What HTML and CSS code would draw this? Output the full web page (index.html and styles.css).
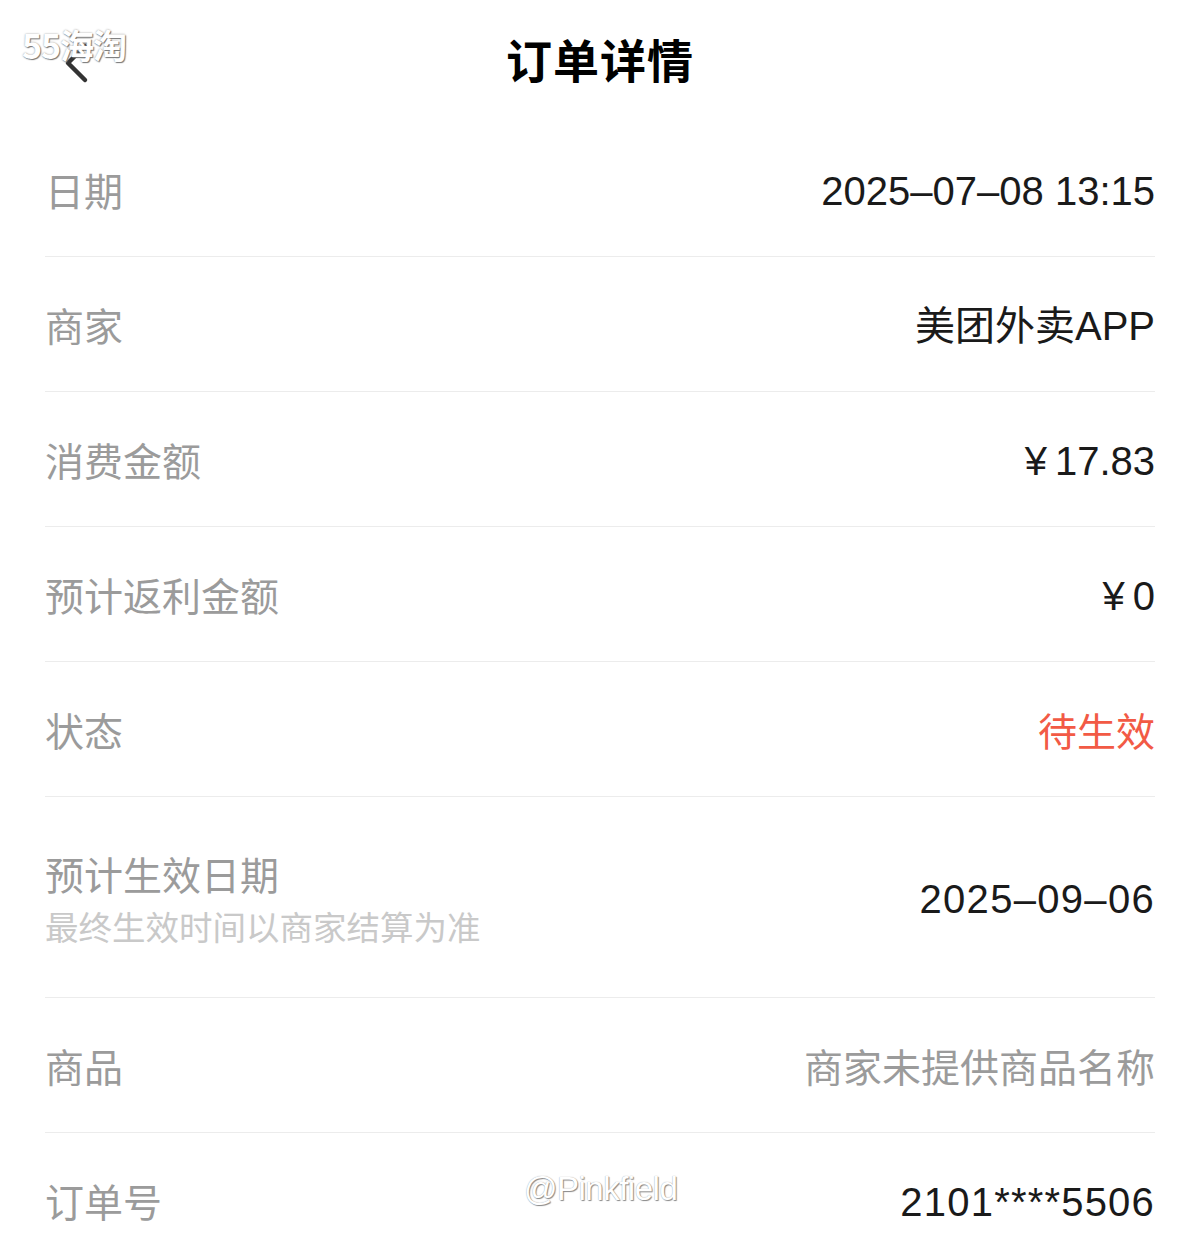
FILE: index.html
```html
<!DOCTYPE html>
<html lang="zh-CN">
<head>
<meta charset="utf-8">
<title>订单详情</title>
<link rel="stylesheet" href="styles.css">
</head>
<body>
<div class="page">
  <header class="header">
    <button class="back" aria-label="返回">
      <svg width="30" height="44" viewBox="0 0 30 44"><polyline points="21,4 4,21 21,38" fill="none" stroke="#333" stroke-width="4.5" stroke-linecap="round" stroke-linejoin="round"/></svg>
    </button>
    <h1 class="title">订单详情</h1>
    <div class="wm-logo">55海淘</div>
  </header>
  <main class="list">
    <div class="row"><span class="label">日期</span><span class="value num">2025–07–08 13:15</span></div>
    <div class="row"><span class="label">商家</span><span class="value num">美团外卖APP</span></div>
    <div class="row"><span class="label">消费金额</span><span class="value num"><span class="yen">¥</span>17.83</span></div>
    <div class="row"><span class="label">预计返利金额</span><span class="value num"><span class="yen">¥</span>0</span></div>
    <div class="row"><span class="label">状态</span><span class="value status">待生效</span></div>
    <div class="row tall">
      <div class="label-group">
        <span class="label">预计生效日期</span>
        <span class="sub">最终生效时间以商家结算为准</span>
      </div>
      <span class="value num wide">2025–09–06</span>
    </div>
    <div class="row"><span class="label">商品</span><span class="value muted">商家未提供商品名称</span></div>
    <div class="row"><span class="label">订单号</span><span class="value num order">2101****5506</span></div>
  </main>
  <div class="wm-user">@Pinkfield</div>
</div>
</body>
</html>
```

FILE: styles.css
```css
* { box-sizing: border-box; }
html, body { margin: 0; padding: 0; background: #fff; }
body {
  font-family: "Liberation Sans", "Noto Sans CJK SC", sans-serif;
  color: #222;
  overflow: hidden;
}
.page { position: relative; width: 1200px; height: 1237px; overflow: hidden; }
.header {
  position: relative;
  height: 122px;
  display: flex;
  align-items: center;
  justify-content: center;
}
.back {
  position: absolute;
  left: 64px;
  top: 42px;
  padding: 0;
  border: 0;
  background: none;
  width: 30px;
  height: 44px;
}
.back svg { display: block; }
.title {
  margin: 0 0 6px;
  font-family: "Noto Sans CJK SC", sans-serif;
  font-size: 46px;
  font-weight: 700;
  color: #000;
  letter-spacing: 1px;
}
.wm-logo {
  position: absolute;
  left: 22px;
  top: 20px;
  font-family: "Noto Sans CJK SC", sans-serif;
  font-size: 34px;
  font-weight: 700;
  color: #fff;
  letter-spacing: -1px;
  text-shadow: 1px 1px 1px #777, 0 0 2px #999;
}
.list { padding: 0 45px; }
.row {
  height: 135px;
  border-bottom: 1px solid #ececec;
  display: flex;
  align-items: center;
  justify-content: space-between;
  padding-top: 4px;
}
.row.tall { height: 201px; }
.label {
  font-family: "Noto Sans CJK SC", sans-serif;
  font-size: 39px;
  color: #9b9b9b;
  line-height: 1.2;
  margin-bottom: 4px;
}
.label-group { display: flex; flex-direction: column; gap: 10px; margin-bottom: 2px; }
.label-group .label { margin-bottom: 0; }
.sub {
  font-family: "Noto Sans CJK SC", sans-serif;
  font-size: 33.5px;
  color: #c9c9c9;
  line-height: 1.2;
}
.value {
  font-size: 40px;
  line-height: 1.2;
  color: #1a1a1a;
}
.num { font-family: "Liberation Sans", "Noto Sans CJK SC", sans-serif; }
.wide { letter-spacing: 1.3px; }
.order { letter-spacing: 1.2px; }
.yen { margin-right: 8px; }
.status {
  font-family: "Noto Sans CJK SC", sans-serif;
  font-size: 39px;
  color: #f25a45;
  margin-bottom: 4px;
}
.muted {
  font-family: "Noto Sans CJK SC", sans-serif;
  font-size: 39px;
  color: #9b9b9b;
  margin-bottom: 4px;
}
.wm-user {
  position: absolute;
  left: 524px;
  top: 1170px;
  font-family: "Liberation Sans", sans-serif;
  font-size: 33px;
  color: #fff;
  letter-spacing: -0.5px;
  text-shadow: 1px 1px 1px #888, 0 0 1px #999;
}
```
